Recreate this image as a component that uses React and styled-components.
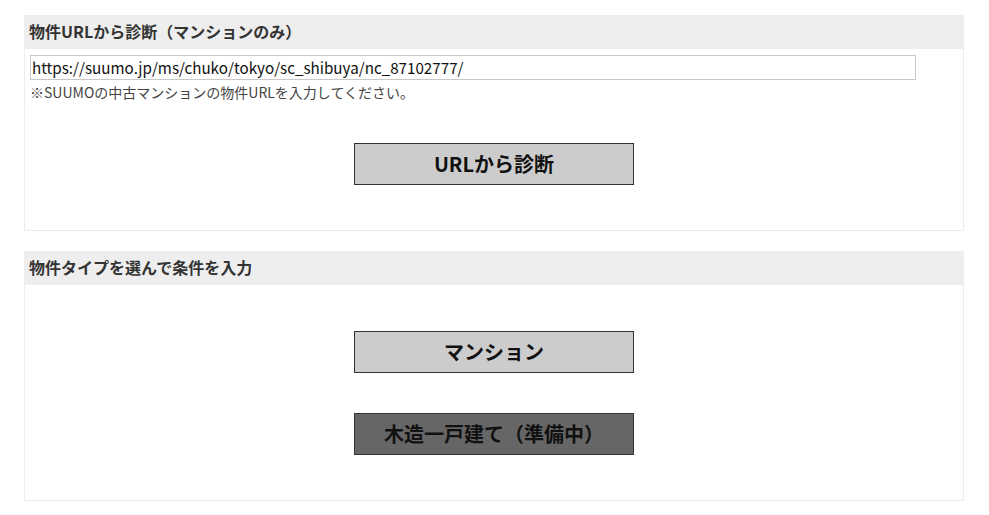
import React from "react";
import styled, { createGlobalStyle } from "styled-components";

const Global = createGlobalStyle`
  html, body { margin: 0; padding: 0; background: #fff; }
  body { font-family: "Noto Sans CJK JP", "Noto Sans", sans-serif; color: #333; }
`;

const Page = styled.div`
  display: flex;
  flex-direction: column;
  gap: 20px;
  padding: 15px 0 0 24px;
  width: 940px;
`;

const Section = styled.section`
  border: 1px solid #ececec;
  border-top: none;
  display: flex;
  flex-direction: column;
`;

const Header = styled.h2`
  margin: 0 -1px;
  height: 34px;
  background: #eeeeee;
  display: flex;
  align-items: center;
  padding: 0 0 2px 5px;
  box-sizing: border-box;
  font-size: 16px;
  font-weight: bold;
  color: #333;
`;

const Body = styled.div`
  display: flex;
  flex-direction: column;
  padding: ${(p) => p.$pad};
`;

const UrlInput = styled.input`
  width: 886px;
  height: 25px;
  box-sizing: border-box;
  border: 1px solid #c8c8c8;
  padding: 0 1px 1px;
  font-family: "Noto Sans CJK JP", "Noto Sans", sans-serif;
  font-size: 15.2px;
  color: #111;
  outline: none;
`;

const Note = styled.p`
  margin: 2px 0 0;
  font-size: 14px;
  line-height: 20px;
  color: #444;
`;

const ButtonColumn = styled.div`
  display: flex;
  flex-direction: column;
  align-items: center;
  gap: 40px;
  margin-top: ${(p) => p.$top}px;
`;

const ActionButton = styled.button`
  width: 280px;
  height: 42px;
  border: 1px solid #333;
  background: ${(p) => (p.$disabled ? "#666666" : "#cccccc")};
  color: #111;
  font-family: "Noto Sans CJK JP", "Noto Sans", sans-serif;
  font-size: 20px;
  font-weight: bold;
  cursor: pointer;
  padding: 0 0 2px;
`;

export default function App() {
  return (
    <>
      <Global />
      <Page>
        <Section>
          <Header>物件URLから診断（マンションのみ）</Header>
          <Body $pad="6px 5px 45px">
            <UrlInput
              type="text"
              defaultValue="https://suumo.jp/ms/chuko/tokyo/sc_shibuya/nc_87102777/"
            />
            <Note>※SUUMOの中古マンションの物件URLを入力してください。</Note>
            <ButtonColumn $top={41}>
              <ActionButton>URLから診断</ActionButton>
            </ButtonColumn>
          </Body>
        </Section>
        <Section>
          <Header>物件タイプを選んで条件を入力</Header>
          <Body $pad="0 5px 45px">
            <ButtonColumn $top={46}>
              <ActionButton>マンション</ActionButton>
              <ActionButton $disabled>木造一戸建て（準備中）</ActionButton>
            </ButtonColumn>
          </Body>
        </Section>
      </Page>
    </>
  );
}
